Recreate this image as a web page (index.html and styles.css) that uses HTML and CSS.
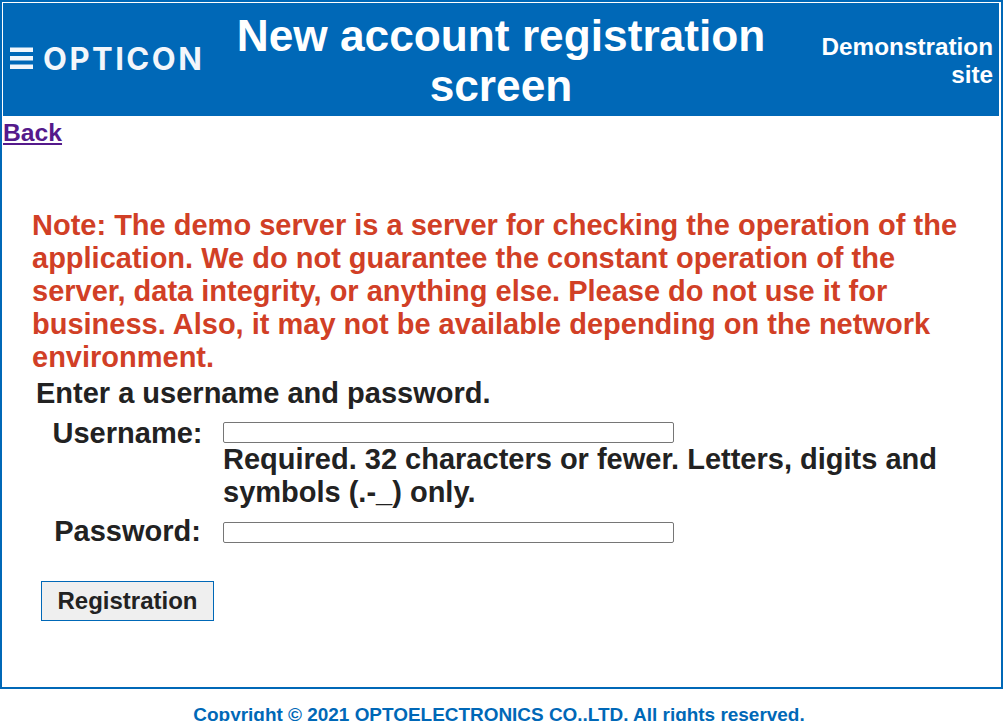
FILE: index.html
```html
<!DOCTYPE html>
<html lang="en">
<head>
<meta charset="UTF-8" />
<meta name="viewport" content="width=device-width, initial-scale=1" />
<title>New account registration screen</title>
<link rel="stylesheet" href="styles.css">
</head>
<body>
  <div class="frame">
    <header class="top">
      <div class="logo">
        <svg class="logo-icon" width="23" height="23" viewBox="0 0 23 23" aria-hidden="true">
          <rect x="0" y="0.5" width="23" height="4.5" fill="#f2f6fb" />
          <rect x="0" y="9" width="23" height="4.5" fill="#f2f6fb" />
          <rect x="0" y="17.5" width="23" height="4.5" fill="#f2f6fb" />
        </svg>
        <span class="logo-text">OPTICON</span>
      </div>
      <h1 class="title">New account registration screen</h1>
      <div class="site">Demonstration site</div>
    </header>
    <a class="back" href="#">Back</a>
    <main class="content">
      <p class="note">Note: The demo server is a server for checking the operation of the application. We do not guarantee the constant operation of the server, data integrity, or anything else. Please do not use it for business. Also, it may not be available depending on the network environment.</p>
      <p class="lead">Enter a username and password.</p>
      <form class="form">
        <label class="label" for="username">Username:</label>
        <div class="field">
          <input class="input" type="text" id="username" name="username" />
          <div class="hint">Required. 32 characters or fewer. Letters, digits and symbols (.-_) only.</div>
        </div>
        <label class="label label-pass" for="password">Password:</label>
        <div class="field field-pass">
          <input class="input" type="password" id="password" name="password" />
        </div>
        <button class="submit" type="button">Registration</button>
      </form>
    </main>
  </div>
  <footer class="copy">Copyright © 2021 OPTOELECTRONICS CO.,LTD. All rights reserved.</footer>
</body>
</html>
```

FILE: styles.css
```css
html, body {
  height: 721px;
  overflow: hidden;
}
body {
  margin: 0;
  background: white;
  font-family: "Liberation Sans", Arial, sans-serif;
  font-weight: 700;
  color: #222;
}
.frame {
  box-sizing: border-box;
  height: 689px;
  border: 2px solid #0068b7;
  padding: 1px 2px 0 1px;
}
.top {
  height: 113px;
  background: #0068b7;
  color: white;
  display: grid;
  grid-template-columns: 219px 558px 1fr;
  align-items: center;
}
.logo {
  display: flex;
  align-items: center;
  padding: 0 0 2px 7px;
  gap: 10px;
}
.logo-icon {
  flex: none;
}
.logo-text {
  font-family: Inter, sans-serif;
  font-weight: 700;
  font-size: 31px;
  line-height: 32px;
  letter-spacing: 2.5px;
  color: #f2f6fb;
}
.title {
  margin: 0;
  padding-top: 2px;
  font-size: 44.25px;
  line-height: 50px;
  text-align: center;
  font-weight: 700;
}
.site {
  font-size: 24.3px;
  line-height: 28px;
  text-align: right;
  padding: 2px 6px 0 0;
}
.back {
  display: block;
  width: fit-content;
  font-size: 24.7px;
  line-height: 33px;
  color: #551a8b;
}
.content {
  padding: 60px 30px 0 29px;
}
.note {
  margin: 0;
  font-size: 29px;
  line-height: 33px;
  color: #d13f26;
}
.lead {
  margin: 3px 0 0 4px;
  font-size: 29px;
  line-height: 33px;
}
.form {
  display: grid;
  grid-template-columns: 191px 1fr;
  margin-top: 7px;
}
.label {
  font-size: 29px;
  line-height: 33px;
  text-align: center;
}
.label-pass {
  margin-top: -1px;
}
.field {
  padding-top: 5px;
  margin-bottom: 7px;
}
.field-pass {
  padding-top: 6px;
}
.input {
  display: block;
  box-sizing: border-box;
  width: 451px;
  height: 21px;
  margin: 0;
  padding: 1px 2px;
  border: 1px solid #767676;
  border-radius: 2px;
  background: white;
}
.hint {
  font-size: 29px;
  line-height: 33px;
}
.submit {
  grid-column: 1 / 3;
  justify-self: start;
  box-sizing: border-box;
  width: 173px;
  height: 40px;
  margin: 31px 0 0 9px;
  padding: 0;
  border: 1px solid #0068b7;
  background: #efefef;
  color: #222;
  font-family: inherit;
  font-weight: 700;
  font-size: 24px;
}
.copy {
  margin-top: 15px;
  padding-right: 5px;
  text-align: center;
  font-size: 18.95px;
  line-height: 22px;
  color: #0068b7;
}
```
